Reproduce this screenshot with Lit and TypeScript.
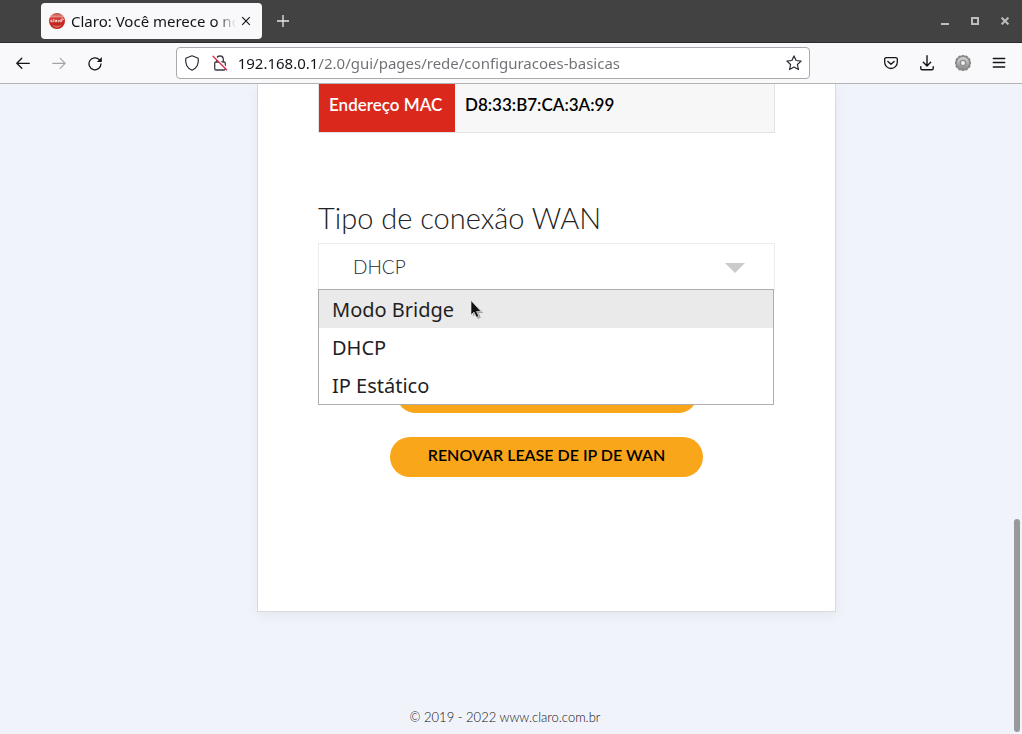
import { LitElement, html, css, svg } from "lit";
import { customElement, state } from "lit/decorators.js";

@customElement("browser-chrome")
export class BrowserChrome extends LitElement {
  static styles = css`
    :host { display: block; font-family: "Noto Sans", sans-serif; color: #15141a; }
    button { appearance: none; border: 0; padding: 0; margin: 0; background: none; color: inherit; font: inherit; display: grid; place-items: center; }
    svg { display: block; }
    .titlebar { display: flex; align-items: center; height: 42px; background: #424242; border-bottom: 1px solid #2b2b2b; padding: 0 2px 0 41px; }
    .tab { display: flex; align-items: center; width: 221px; height: 36px; box-sizing: border-box; border-radius: 4px; background: #f9f9fb; padding: 0 6px 0 8px; gap: 6px; }
    .title { flex: 1; min-width: 0; overflow: hidden; white-space: nowrap; font-size: 15px; line-height: 24px; -webkit-mask-image: linear-gradient(to left, transparent, #000 20px); mask-image: linear-gradient(to left, transparent, #000 20px); }
    .close { width: 20px; height: 20px; margin-left: -6px; }
    .new { width: 42px; height: 36px; color: #e8e8e8; }
    .windowed { display: flex; margin-left: auto; color: #bdbdbd; }
    .windowed button { width: 30px; height: 30px; }
    .toolbar { display: flex; align-items: center; height: 40px; background: #f9f9fb; border-bottom: 1px solid #b4b4b6; padding: 0 5px; }
    .tool { width: 36px; height: 32px; flex: none; }
    .dim { color: #a3a3a6; }
    .space { flex: 63; }
    .urlbar { flex: 634; min-width: 0; box-sizing: border-box; display: flex; align-items: center; height: 32px; border: 1px solid #a9a9ad; border-radius: 4px; background: #fff; padding: 0 1px; }
    .urlbar button { width: 28px; height: 30px; flex: none; }
    .address { flex: 1; min-width: 0; border: 0; outline: 0; margin: 0 0 0 4px; padding: 0; height: 30px; font-family: inherit; font-size: 15px; background: linear-gradient(to right, #15141a 80px, #6f6f75 80px); -webkit-background-clip: text; background-clip: text; -webkit-text-fill-color: transparent; }
  `;

  render() {
    const teeth = Array.from({ length: 12 }, (_, i) => i * 30);
    return html`
      <header>
        <div class="titlebar">
          <div class="tab">
            <svg width="16" height="16" viewBox="0 0 16 16">
              <defs><linearGradient id="ball" x1="0" y1="0" x2="0" y2="1"><stop offset="0" stop-color="#b9453e" /><stop offset=".22" stop-color="#e58983" /><stop offset=".36" stop-color="#d22b22" /><stop offset="1" stop-color="#b3211b" /></linearGradient></defs>
              <circle cx="8" cy="8" r="8" fill="url(#ball)" />
              <path d="M3.200 7Q1.400 6.700 1.500 8t1.900.9M4.800 6.300v2.500M7.600 7.200Q6 6.700 6 8t1.600.7V7.200M9.200 9V7.300h.9M12.500 8a.9.9 0 1 1-1.800 0 .9.9 0 0 1 1.800 0M12.700 6.300l.6-1M13.300 7l1.100-.4" fill="none" stroke="#fff" stroke-width=".8" stroke-linecap="round" />
              <path d="M3 11.500q5 2.500 10 0-2 3.300-5 3.300T3 11.500" fill="#e8837c" opacity=".7" />
            </svg>
            <span class="title">Claro: Você merece o novo</span>
            <button class="close" aria-label="Fechar aba"><svg width="10" height="10" viewBox="0 0 10 10"><path d="M1.200 1.200l7.600 7.600M8.800 1.200L1.200 8.800" stroke="currentColor" stroke-width="1.200" /></svg></button>
          </div>
          <button class="new" aria-label="Nova aba"><svg width="12" height="12" viewBox="0 0 12 12"><path d="M6 0v12M0 6h12" stroke="currentColor" stroke-width="1.300" /></svg></button>
          <div class="windowed">
            <button aria-label="Minimizar"><svg width="8" height="8"><path d="M0 6h8v2H0z" fill="currentColor" /></svg></button>
            <button aria-label="Maximizar"><svg width="8" height="8"><path d="M1 1h6v6H1z" fill="none" stroke="currentColor" stroke-width="2" /></svg></button>
            <button aria-label="Fechar"><svg width="8" height="8"><path d="M.6.6l6.800 6.800M7.400.6L.6 7.400" stroke="currentColor" stroke-width="2" /></svg></button>
          </div>
        </div>
        <nav class="toolbar">
          <button class="tool" aria-label="Voltar"><svg width="16" height="16" viewBox="0 0 16 16"><path d="M14.300 8.300H2M6.800 3.300l-5 5 5 5" fill="none" stroke="currentColor" stroke-width="1.300" stroke-linecap="round" stroke-linejoin="round" /></svg></button>
          <button class="tool dim" aria-label="Avançar"><svg width="16" height="16" viewBox="0 0 16 16"><path d="M1.700 8.300H14M9.200 3.300l5 5-5 5" fill="none" stroke="currentColor" stroke-width="1.200" stroke-linecap="round" stroke-linejoin="round" /></svg></button>
          <button class="tool" aria-label="Recarregar"><svg width="16" height="16" viewBox="0 0 16 16"><path d="M12.300 4.600A6 6 0 1 0 14 8.800" fill="none" stroke="currentColor" stroke-width="1.300" stroke-linecap="round" /><path d="M14.800 2v4.500q0 .5-.5.500H9.800z" fill="currentColor" /></svg></button>
          <span class="space"></span>
          <div class="urlbar">
            <button aria-label="Proteção"><svg width="16" height="16" viewBox="0 0 16 16"><path d="M8 .8l6.200 2.400q.6 4.500-1 7.500Q11.500 13.800 8 15.200 4.500 13.800 2.800 10.700q-1.600-3-1-7.500z" fill="none" stroke="#2b2a33" stroke-width="1.200" stroke-linejoin="round" /></svg></button>
            <button aria-label="Conexão não segura"><svg width="16" height="16" viewBox="0 0 16 16"><rect x="2.700" y="7" width="10.600" height="8" rx="1.300" fill="none" stroke="#3c3b44" stroke-width="1.300" /><path d="M4.700 7V4.300a3.300 3.300 0 0 1 6.600 0V7" fill="none" stroke="#3c3b44" stroke-width="1.300" /><path d="M1.800 .6l13.600 13.600" stroke="#fff" stroke-width="2" /><path d="M1 1.200l13.600 13.600" stroke="#e22850" stroke-width="1.300" stroke-linecap="round" /></svg></button>
            <input class="address" aria-label="Endereço" type="text" value="192.168.0.1/2.0/gui/pages/rede/configuracoes-basicas" />
            <button aria-label="Favoritar"><svg width="16" height="16" viewBox="0 0 16 16"><path d="M8 .9l2.100 4.600 5 .6-3.700 3.400 1 5L8 12l-4.400 2.500 1-5L.9 6.100l5-.6z" fill="none" stroke="#2b2a33" stroke-width="1.200" stroke-linejoin="round" /></svg></button>
          </div>
          <span class="space"></span>
          <button class="tool" aria-label="Pocket"><svg width="16" height="16" viewBox="0 0 16 16"><path d="M3.200 2.600h9.600a1.500 1.500 0 0 1 1.500 1.500V7.200a6.300 6.300 0 0 1-12.600 0V4.100a1.500 1.500 0 0 1 1.500-1.500z" fill="none" stroke="currentColor" stroke-width="1.300" /><path d="M4.900 6.400L8 9.200l3.100-2.800" fill="none" stroke="currentColor" stroke-width="1.400" stroke-linecap="round" stroke-linejoin="round" /></svg></button>
          <button class="tool" aria-label="Downloads"><svg width="16" height="16" viewBox="0 0 16 16"><path d="M8 .8v10M4.300 7.200L8 10.900l3.700-3.700M1.800 11.800v1.600q0 1.300 1.300 1.300h9.800q1.300 0 1.300-1.300v-1.600" fill="none" stroke="currentColor" stroke-width="1.400" stroke-linecap="round" stroke-linejoin="round" /></svg></button>
          <button class="tool" aria-label="Extensão"><svg width="16" height="16" viewBox="0 0 16 16">
            <defs><linearGradient id="steel" x1="0" y1="0" x2="0" y2="1"><stop offset="0" stop-color="#d6d6d6" /><stop offset="1" stop-color="#8c8c8c" /></linearGradient></defs>
            ${teeth.map((a) => svg`<rect x="6.600" y=".2" width="2.800" height="4" rx=".8" fill="#8d8d8d" stroke="#5f5f5f" stroke-width=".5" transform=${`rotate(${a} 8 8)`} />`)}<circle cx="8" cy="8" r="6.100" fill="url(#steel)" /><circle cx="8" cy="8" r="3.200" fill="#8a8a8a" /><circle cx="8" cy="8" r="2.200" fill="#d8d8d8" /><path d="M7.300 7h1.400v2H7.300z" fill="#fff" /></svg></button>
          <button class="tool" aria-label="Menu"><svg width="16" height="16" viewBox="0 0 16 16"><path d="M2.300 3.500h11.400M2.300 7.500h11.400M2.300 12h11.400" stroke="currentColor" stroke-width="1.400" stroke-linecap="round" /></svg></button>
        </nav>
      </header>
    `;
  }
}

@customElement("app-root")
export class AppRoot extends LitElement {
  @state() private options = ["Modo Bridge", "DHCP", "IP Estático"];
  @state() private hovered = 0;

  static styles = css`
    :host { display: flex; flex-direction: column; min-height: 100vh; background: #f0f3fa; font-family: Lato, sans-serif; }
    .view { position: relative; flex: 1; display: flex; flex-direction: column; overflow: hidden; }
    .columns { display: grid; grid-template-columns: 257fr 579fr 186fr; }
    .card { grid-column: 2; background: #fff; border: 1px solid #d9dade; border-top: 0; box-shadow: 0 4px 12px rgba(0, 0, 0, 0.05); padding: 0 60px 134px; }
    .info { width: 100%; border-collapse: separate; border-spacing: 0; border: 1px solid #e3e3e3; border-top: 0; font-size: 17px; line-height: 20px; text-align: left; }
    .info th, .info td { padding: 11px 10px 17px; }
    .info th { background: #da291c; color: #fff; font-weight: 600; width: 116px; white-space: nowrap; }
    .info td { background: #f7f7f7; color: #000; font-weight: 600; }
    .heading { display: block; margin: 67px 0 7px; font-size: 29px; line-height: 36px; font-weight: 300; color: #222; }
    .picker { position: relative; }
    .choice { display: block; width: 100%; height: 48px; appearance: none; border: 1px solid #ececec; border-radius: 0; padding: 0 34px 2px; font-family: inherit; font-size: 19px; font-weight: 300; color: #1c2a37; background: #fff; outline: 0; }
    .arrow { position: absolute; right: 30px; top: 20px; pointer-events: none; }
    .menu { position: absolute; z-index: 1; left: 0; right: 1px; top: 46px; margin: 0; padding: 0; list-style: none; border: 1px solid #adadb0; background: #fff; font-family: "Noto Sans", sans-serif; font-size: 20px; line-height: 36px; color: #1f1f24; }
    .option { padding: 2px 13px 0; }
    .hovered { background: #eaeaea; }
    .pointer { position: absolute; z-index: 2; left: 152px; top: 57px; pointer-events: none; }
    .actions { display: flex; flex-direction: column; align-items: center; gap: 24px; margin-top: 82px; }
    .action { appearance: none; border: 0; border-radius: 20px; height: 40px; padding: 0 0 6px; width: 313px; max-width: 100%; background: #faa61a; color: #000; font-family: inherit; font-size: 16px; font-weight: 600; text-transform: uppercase; }
    .narrow { width: 302px; }
    .footer { margin-top: auto; padding: 0 12px 8px 0; text-align: center; font-size: 13px; line-height: 18px; font-weight: 300; color: #111; }
    .thumb { position: absolute; right: 2px; bottom: 2px; width: 6px; height: 213px; border-radius: 3px; background: #98999d; }
  `;

  render() {
    return html`
      <browser-chrome></browser-chrome>
      <div class="view">
        <main class="columns">
          <section class="card">
            <table class="info">
              <tbody>
                <tr><th scope="row">Endereço MAC</th><td>D8:33:B7:CA:3A:99</td></tr>
              </tbody>
            </table>
            <label class="heading" for="wan">Tipo de conexão WAN</label>
            <div class="picker">
              <select class="choice" id="wan">
                ${this.options.map((o) => html`<option ?selected=${o === "DHCP"}>${o}</option>`)}
              </select>
              <svg class="arrow" width="20" height="10" viewBox="0 0 20 10"><path d="M0 0h20L10 10z" fill="#cbcbcb" /></svg>
              <ul class="menu" role="listbox" aria-label="Tipo de conexão WAN">
                ${this.options.map((o, i) => html`<li role="option" aria-selected=${o === "DHCP"} class="option ${i === this.hovered ? "hovered" : ""}" @mouseenter=${() => (this.hovered = i)}>${o}</li>`)}
              </ul>
              <svg class="pointer" width="14" height="20" viewBox="0 0 14 20">
                <path d="M3 2.500v14l2.500-2.500 2.300 5 3-1.300-2-4.700h4.500z" fill="#000" opacity=".3" />
                <path d="M1 .5v14.600l3-3 2.400 5.200 2.400-1-2.300-4.800H11z" fill="#111" stroke="#f4f4f4" stroke-width=".6" />
              </svg>
            </div>
            <div class="actions">
              <button class="action narrow">Salvar</button>
              <button class="action">Renovar lease de IP de WAN</button>
            </div>
          </section>
        </main>
        <footer class="footer">© 2019 - 2022 www.claro.com.br</footer>
        <div class="thumb"></div>
      </div>
    `;
  }
}
